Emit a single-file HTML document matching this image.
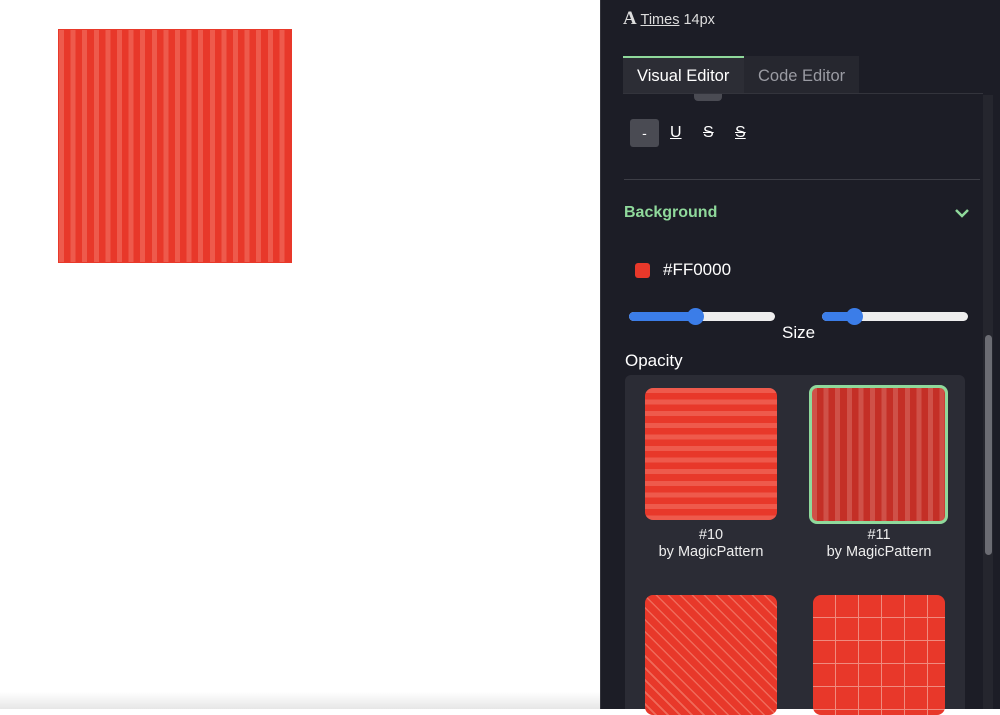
<!DOCTYPE html>
<html><head><style>
*{margin:0;padding:0;box-sizing:border-box}
body{width:1000px;height:709px;overflow:hidden;background:#fff;font-family:"Liberation Sans",sans-serif;position:relative;color:#fff}
.sq{position:absolute;left:58px;top:29px;width:234px;height:234px;border:1px solid #e8392a;background:repeating-linear-gradient(90deg,#ee5a4c 0 5px,#e8382a 5px 11.6px)}
.bot{position:absolute;left:0;top:692px;width:600px;height:17px;background:linear-gradient(#fff,#e6e6e6)}
.p{position:absolute;left:600px;top:0;width:400px;height:709px;background:#1c1d26;border-left:1px solid #33343c}
.a{position:absolute;white-space:nowrap}
.tabs{position:absolute;left:623px;top:56px;height:38px;display:flex;white-space:nowrap}
.tab{flex:none;height:38px;padding:0 14px;font-size:16.5px;line-height:40px;background:#26272f}
.tab1{background:#2c2d35;border-top:2px solid #8fd99b;line-height:36px;width:121px;color:#fff}
.tab2{color:#9a9ba3;width:115px}
.sb{position:absolute;left:983px;top:95px;width:10px;height:614px;background:#25262e}
.th{position:absolute;left:985px;top:335px;width:7px;height:220px;background:#6b6c73;border-radius:4px}
.sl{position:absolute;height:9px;border-radius:5px;background:#eee}
.sl i{position:absolute;left:0;top:0;height:9px;border-radius:5px;background:#3b7de8}
.sl b{position:absolute;top:-4px;width:17px;height:17px;border-radius:50%;background:#3b7de8}
.grid{position:absolute;left:625px;top:375px;width:340px;height:334px;background:#2b2c35;border-radius:6px 6px 0 0}
.c{position:absolute;border-radius:8px}
.cap{position:absolute;width:160px;text-align:center;font-size:14.5px;line-height:17px;color:#eee}
</style></head><body>
<div class="sq"></div>
<div class="bot"></div>
<div class="p"></div>
<div class="a" style="left:623px;top:8px;font-size:14.5px;color:#ddd"><span style="font-family:'Liberation Serif',serif;font-weight:bold;font-size:19px;color:#ddd">A</span> <span style="text-decoration:underline">Times</span> 14px</div>
<div class="tabs"><div class="tab tab1">Visual Editor</div><div class="tab tab2">Code Editor</div></div>
<div class="a" style="left:623px;top:93px;width:360px;height:1px;background:#33343c"></div>
<div class="a" style="left:694px;top:94px;width:28px;height:7px;background:#4a4b53;border-radius:0 0 4px 4px"></div>
<div class="a" style="left:630px;top:119px;width:29px;height:28px;background:#4a4b53;border-radius:3px;text-align:center;line-height:28px;font-size:14px">-</div>
<div class="a" style="left:670px;top:124px;font-size:16px;text-decoration:underline">U</div>
<div class="a" style="left:703px;top:124px;font-size:16px;text-decoration:line-through">S</div>
<div class="a" style="left:735px;top:124px;font-size:16px;text-decoration:underline line-through">S</div>
<div class="a" style="left:624px;top:179px;width:356px;height:1px;background:#3d3e46"></div>
<div class="a" style="left:624px;top:204px;font-size:16px;font-weight:bold;color:#8fd99b">Background</div>
<svg class="a" style="left:954px;top:207px" width="16" height="12" viewBox="0 0 16 12"><path d="M2 3l6 6 6-6" stroke="#8fd99b" stroke-width="2.5" fill="none"/></svg>
<div class="sb"></div><div class="th"></div>
<div class="a" style="left:635px;top:263px;width:15px;height:15px;background:#e8382a;border-radius:3px"></div>
<div class="a" style="left:663px;top:260px;font-size:17px">#FF0000</div>
<div class="sl" style="left:629px;top:312px;width:146px"><i style="width:66px"></i><b style="left:58px"></b></div>
<div class="sl" style="left:822px;top:312px;width:146px"><i style="width:34px"></i><b style="left:24px"></b></div>
<div class="a" style="left:782px;top:323px;font-size:17px">Size</div>
<div class="a" style="left:625px;top:351px;font-size:17px">Opacity</div>
<div class="grid"></div>
<div class="c" style="left:645px;top:388px;width:132px;height:132px;background:repeating-linear-gradient(180deg,#ee5a4c 0 5px,#e8382a 5px 11.6px)"></div>
<div class="c" style="left:809px;top:385px;width:139px;height:139px;border:3px solid #8fd99b;background:repeating-linear-gradient(90deg,#cf5148 0 5px,#c42f26 5px 11.6px)"></div>
<div class="cap" style="left:631px;top:527px">#10<br>by MagicPattern</div>
<div class="cap" style="left:799px;top:527px">#11<br>by MagicPattern</div>
<div class="c" style="left:645px;top:595px;width:132px;height:120px;background:repeating-linear-gradient(45deg,#e8382a 0 7px,#ef6a5a 7px 8.5px)"></div>
<div class="c" style="left:813px;top:595px;width:132px;height:120px;background:repeating-linear-gradient(90deg,transparent 0 22px,#f08a7e 22px 23px),repeating-linear-gradient(180deg,#e8382a 0 22px,#f08a7e 22px 23px)"></div>
</body></html>
